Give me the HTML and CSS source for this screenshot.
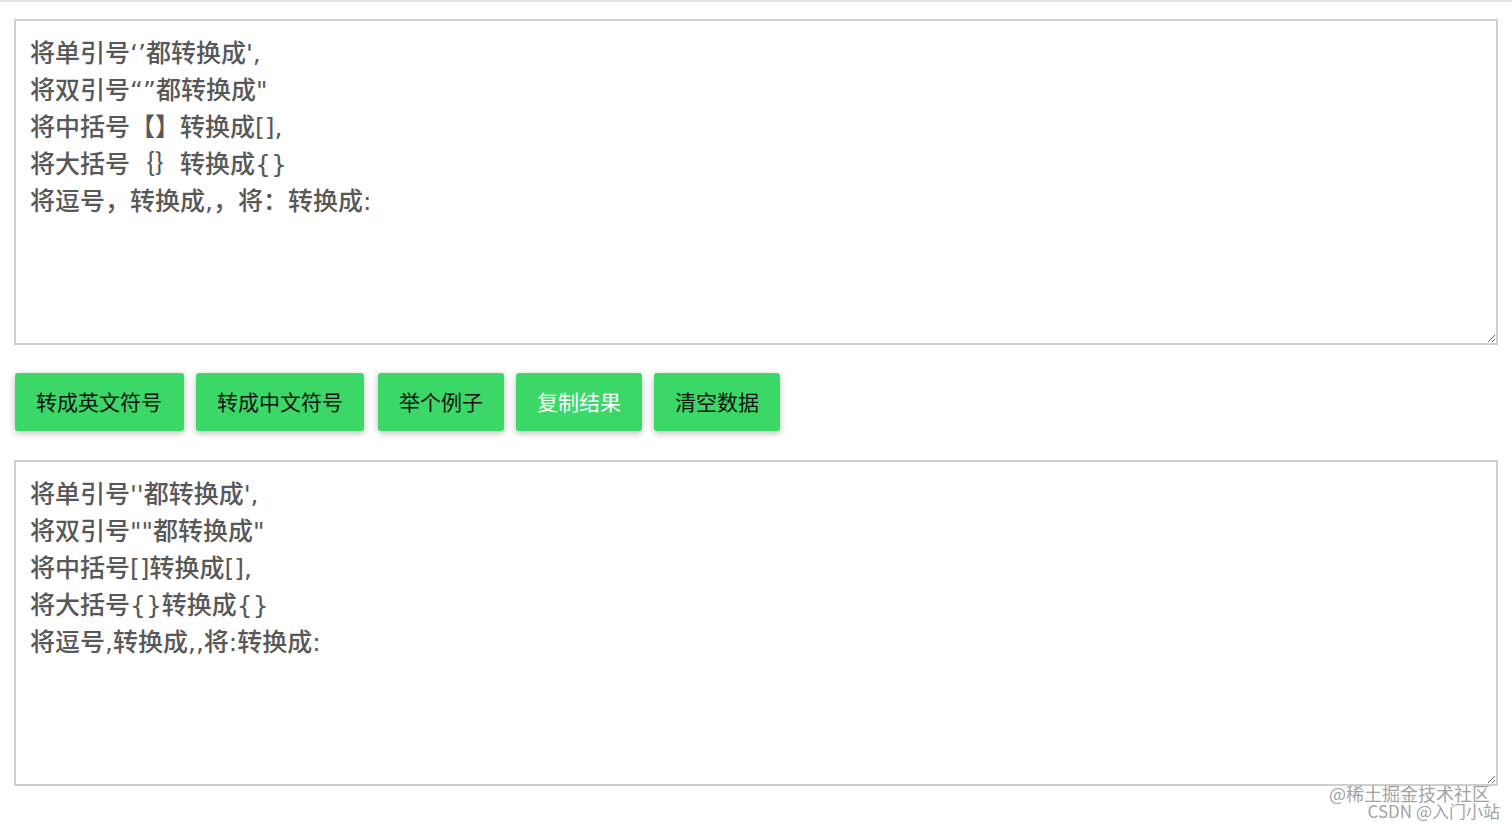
FILE: index.html
```html
<!DOCTYPE html>
<html lang="zh-CN">
<head>
<meta charset="utf-8">
<title>符号转换</title>
<link rel="stylesheet" href="styles.css">
</head>
<body>
<div class="topline"></div>
<main class="page">
<textarea class="box">将单引号‘’都转换成',
将双引号“”都转换成"
将中括号【】转换成[],
将大括号｛｝转换成{}
将逗号，转换成,，将：转换成:</textarea>
<div class="actions">
<button class="btn btn-first">转成英文符号</button>
<button class="btn">转成中文符号</button>
<button class="btn btn-third">举个例子</button>
<button class="btn btn-light">复制结果</button>
<button class="btn">清空数据</button>
</div>
<textarea class="box">将单引号''都转换成',
将双引号""都转换成"
将中括号[]转换成[],
将大括号{}转换成{}
将逗号,转换成,,将:转换成:</textarea>
</main>
<div class="watermark">
<div class="wm-1">@稀土掘金技术社区</div>
<div class="wm-2">CSDN @入门小站</div>
</div>
</body>
</html>
```
FILE: styles.css
```css
html, body {
  margin: 0;
  padding: 0;
  background: #fff;
  font-family: "Noto Sans CJK SC", "Noto Sans", sans-serif;
}
body {
  position: relative;
  height: 828px;
  overflow: hidden;
}
.topline {
  height: 2px;
  background: #e6e6e6;
}
.page {
  padding: 17px 14px 0 14px;
  display: flex;
  flex-direction: column;
}
.box {
  display: block;
  box-sizing: border-box;
  width: 1484px;
  height: 326px;
  border: 2px solid #cfcfcf;
  border-radius: 0;
  padding: 13.5px 14px 12px 14px;
  margin: 0;
  font-family: "DejaVu Sans", "Noto Sans CJK SC", sans-serif;
  font-size: 25px;
  font-weight: 500;
  line-height: 37px;
  color: #585858;
  background: #fff;
  outline: none;
  resize: both;
}
.actions {
  display: flex;
  gap: 12px;
  padding: 28px 0 29px 1px;
}
.btn {
  height: 58px;
  padding: 0 21px 2px 21px;
  border: none;
  border-radius: 3px;
  background: #3bd767;
  color: #111;
  font-family: "Noto Sans CJK SC", sans-serif;
  font-size: 21px;
  box-shadow: 0 2px 7px rgba(0,0,0,0.28);
  cursor: pointer;
}
.btn-first {
  padding-right: 22px;
}
.btn-third {
  margin-left: 2px;
}
.btn-light {
  color: #fff;
}
.watermark {
  position: absolute;
  right: 12px;
  top: 784px;
  text-align: right;
  font-family: "Noto Sans CJK SC", sans-serif;
  line-height: 18px;
  color: #a3a3a3;
}
.wm-1 {
  font-size: 18px;
  margin-right: 10px;
}
.wm-2 {
  font-size: 17px;
}
```
